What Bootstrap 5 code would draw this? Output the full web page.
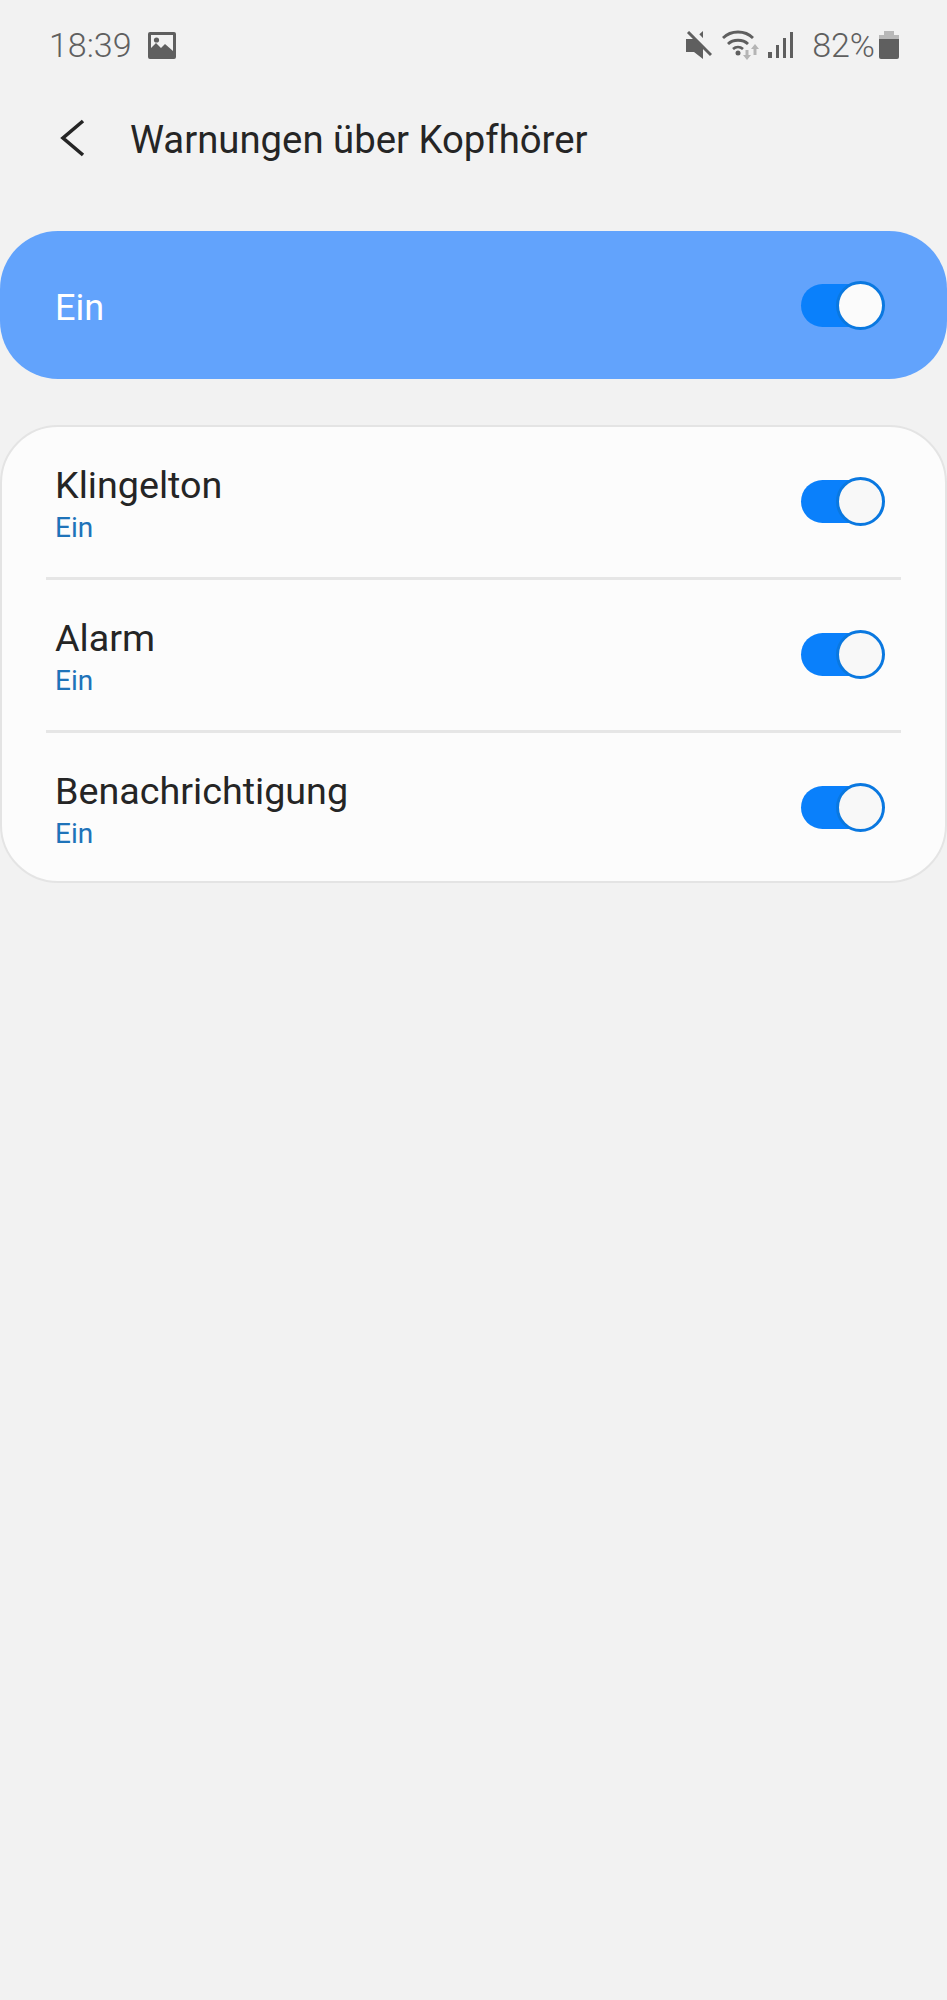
<!DOCTYPE html>
<html lang="de">
<head>
	<meta charset="UTF-8" />
	<meta name="viewport" content="width=device-width, initial-scale=1.0"/>
	<title>Warnungen über Kopfhörer</title>

	<!-- Bootstrap CSS -->
	<link href="https://cdn.jsdelivr.net/npm/bootstrap@5.3.0/dist/css/bootstrap.min.css" rel="stylesheet" />

	<style>
		body { background: #f2f2f2; font-family: Roboto, "Liberation Sans", sans-serif; color: #252525; min-height: 2000px; }
		.status-row { height: 90px; padding: 0 48px 0 49px; color: #5f5f5f; font-size: 34px; font-weight: 300; }
		.status-row svg { display: block; flex: none; }
		.gap-wifi { margin-left: 10px; }
		.gap-signal { margin-left: 8px; }
		.gap-level { margin-left: 18px; }
		.gap-battery { margin-left: 4px; }
		.title-row { height: 96px; padding-left: 59px; }
		.page-title { font-size: 38.3px; font-weight: 400; margin: 4px 0 0 45px; line-height: 1; }
		.master-card { margin-top: 45px; height: 148px; background: #62a3fc; border-radius: 58px; padding: 0 74px 0 55px; color: #fff; font-size: 36px; }
		.master-label { padding-top: 5px; }
		.setting-card { margin-top: 46px; background: #fcfcfc; border: 2px solid #e4e4e4; border-radius: 58px; height: 458px; overflow: hidden; }
		.setting-row { height: 153px; margin: 0 44px; padding: 0 10px 0 9px; border-bottom: 3px solid #e6e6e6; }
		.setting-row:last-child { height: 150px; border-bottom: 0; }
		.setting-text { margin-top: 2px; }
		.setting-name { font-size: 37.7px; line-height: 44px; }
		.setting-state { font-size: 28px; line-height: 32px; color: #1e73b9; margin-top: 5px; }
		.toggle-track { position: relative; display: block; width: 72px; height: 43px; margin: 0 18px 2px 0; background: #0a80fb; border-radius: 22px; flex: none; }
		.toggle-thumb { position: absolute; top: -3px; left: 35px; width: 49px; height: 49px; border-radius: 50%; background: #f8f8f8; border: 3px solid #0a78e0; }
		.master-card .toggle-track { margin: 0; }
		.master-card .toggle-thumb { background: #fbfbfb; }
	</style>
</head>

<body>
	<div class="status-row d-flex align-items-center">
		<span>18:39</span>
		<svg class="ms-3" width="28" height="27" viewBox="0 0 28 27">
			<path fill="#5f5f5f" fill-rule="evenodd" d="M2 0h24a2 2 0 0 1 2 2v23a2 2 0 0 1-2 2H2a2 2 0 0 1-2-2V2a2 2 0 0 1 2-2zM3 3v13l5-5 5 5 4-4 8 7V3z"/>
			<circle cx="8.500" cy="8" r="2.600" fill="#5f5f5f"/>
		</svg>
		<div class="d-flex align-items-center ms-auto">
			<svg width="26" height="28" viewBox="0 0 26 28">
				<path fill="#5f5f5f" d="M0 8h8L17 0v28l-9-7H0z"/>
				<path stroke="#f2f2f2" stroke-width="6" d="M6 0l22 23"/>
				<path stroke="#5f5f5f" stroke-width="3" d="M2 1l23 23"/>
			</svg>
			<svg class="gap-wifi" width="38" height="30" viewBox="0 0 38 30">
				<g fill="none" stroke="#5f5f5f" stroke-width="2.800">
					<path d="M1 8c8-8 22-8 30 0"/>
					<path d="M6 14c5-5 15-5 20 0"/>
					<path d="M11 19c3-2.500 7-2.500 10 0"/>
				</g>
				<circle cx="16" cy="23" r="2.500" fill="#5f5f5f"/>
				<path fill="#b5b5b5" d="M25 30l-4-5h2.500v-5h3v5H29zM33 14l4 5h-2.500v6h-3v-6H29z"/>
			</svg>
			<svg class="gap-signal" width="26" height="28" viewBox="0 0 26 28">
				<path fill="#5f5f5f" d="M0 21h4v6H0zM8 14h3v13H8zM15 7h3v20h-3zM22 1h3v26h-3z"/>
			</svg>
			<span class="gap-level">82%</span>
			<svg class="gap-battery" width="20" height="28" viewBox="0 0 20 28">
				<path fill="#b8b8b8" d="M5 0h10v4h5v4H0V4h5z"/>
				<path fill="#5f5f5f" d="M0 8h20v18a2 2 0 0 1-2 2H2a2 2 0 0 1-2-2z"/>
			</svg>
		</div>
	</div>

	<div class="title-row d-flex align-items-center">
		<svg width="26" height="38" viewBox="0 0 26 38">
			<path fill="none" stroke="#252525" stroke-width="3.600" d="M24 2L4 19l20 17"/>
		</svg>
		<h1 class="page-title">Warnungen über Kopfhörer</h1>
	</div>

	<div class="master-card d-flex align-items-center justify-content-between">
		<span class="master-label">Ein</span>
		<span class="toggle-track"><span class="toggle-thumb"></span></span>
	</div>

	<div class="setting-card">
		<div class="setting-row d-flex align-items-center justify-content-between">
			<div class="setting-text">
				<div class="setting-name">Klingelton</div>
				<div class="setting-state">Ein</div>
			</div>
			<span class="toggle-track"><span class="toggle-thumb"></span></span>
		</div>
		<div class="setting-row d-flex align-items-center justify-content-between">
			<div class="setting-text">
				<div class="setting-name">Alarm</div>
				<div class="setting-state">Ein</div>
			</div>
			<span class="toggle-track"><span class="toggle-thumb"></span></span>
		</div>
		<div class="setting-row d-flex align-items-center justify-content-between">
			<div class="setting-text">
				<div class="setting-name">Benachrichtigung</div>
				<div class="setting-state">Ein</div>
			</div>
			<span class="toggle-track"><span class="toggle-thumb"></span></span>
		</div>
	</div>

	<!-- Bootstrap JS bundle -->
	<script src="https://cdn.jsdelivr.net/npm/bootstrap@5.3.0/dist/js/bootstrap.bundle.min.js"></script>
</body>
</html>
